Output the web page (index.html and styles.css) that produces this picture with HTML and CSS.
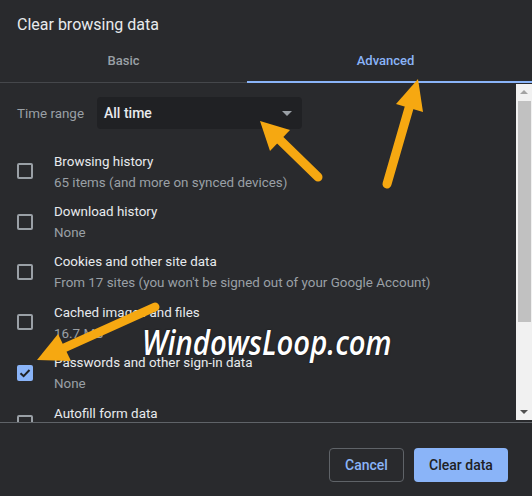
FILE: index.html
```html
<!DOCTYPE html>
<html lang="en">
<head>
  <meta charset="UTF-8">
  <title>Clear browsing data</title>
  <link rel="stylesheet" href="styles.css">
</head>
<body>

  <div class="dialog">
    <h1 class="title">Clear browsing data</h1>

    <div class="tabs">
      <div class="tab">Basic</div>
      <div class="tab active">Advanced</div>
    </div>

    <div class="body">
      <div class="list">
        <div class="range">
          <span class="range-label">Time range</span>
          <div class="select">
            <span>All time</span>
            <span class="caret"></span>
          </div>
        </div>

        <div class="row">
          <span class="box"></span>
          <div class="text">
            <div class="name">Browsing history</div>
            <div class="sub">65 items (and more on synced devices)</div>
          </div>
        </div>
        <div class="row">
          <span class="box"></span>
          <div class="text">
            <div class="name">Download history</div>
            <div class="sub">None</div>
          </div>
        </div>
        <div class="row">
          <span class="box"></span>
          <div class="text">
            <div class="name">Cookies and other site data</div>
            <div class="sub">From 17 sites (you won't be signed out of your Google Account)</div>
          </div>
        </div>
        <div class="row">
          <span class="box"></span>
          <div class="text">
            <div class="name">Cached images and files</div>
            <div class="sub">16.7 MB</div>
          </div>
        </div>
        <div class="row">
          <span class="box checked">
            <svg width="16" height="16" viewBox="0 0 16 16"><path d="M3.5 8.2 L6.6 11.2 L12.5 5" fill="none" stroke="#202124" stroke-width="2"/></svg>
          </span>
          <div class="text">
            <div class="name">Passwords and other sign-in data</div>
            <div class="sub">None</div>
          </div>
        </div>
        <div class="row">
          <span class="box"></span>
          <div class="text">
            <div class="name">Autofill form data</div>
            <div class="sub">None</div>
          </div>
        </div>
      </div>

      <div class="scrollbar">
        <div class="sb-up"></div>
        <div class="sb-thumb"></div>
        <div class="sb-down"></div>
      </div>
    </div>

    <div class="footer">
      <button class="btn cancel">Cancel</button>
      <button class="btn primary">Clear data</button>
    </div>
  </div>

  <!-- annotation overlay -->
  <svg class="marks" width="532" height="496" viewBox="0 0 532 496">
    <g stroke="#f6a811" stroke-width="9" stroke-linecap="round" fill="#f6a811">
      <line x1="318" y1="177" x2="280" y2="140"/>
      <line x1="387" y1="184" x2="409" y2="108"/>
      <line x1="155" y1="307" x2="64" y2="348"/>
    </g>
    <g fill="#f6a811">
      <polygon points="260,121 290,130 270,151"/>
      <polygon points="418,79 423,112 396,104"/>
      <polygon points="37,360 58,334 71,361"/>
    </g>
  </svg>
  <div class="watermark">WindowsLoop.com</div>

</body>
</html>
```

FILE: styles.css
```css
body {
  margin: 0;
  width: 532px;
  height: 496px;
  overflow: hidden;
  background: #292a2d;
  font-family: Roboto, "Liberation Sans", sans-serif;
  color: #e8eaed;
  position: relative;
}
.dialog {
  display: flex;
  flex-direction: column;
  height: 496px;
}
.title {
  margin: 0;
  height: 44px;
  box-sizing: border-box;
  padding: 15px 17px 0;
  font-size: 16px;
  line-height: 20px;
  font-weight: 400;
  color: #e8eaed;
}
.tabs {
  display: flex;
  height: 39px;
}
.tab {
  box-sizing: border-box;
  width: 247px;
  padding-top: 8px;
  line-height: 18px;
  font-size: 13px;
  font-weight: 500;
  text-align: center;
  color: #9aa0a6;
  border-bottom: 1px solid #45474b;
}
.tab.active {
  flex: 1;
  padding-right: 8px;
  color: #8ab4f8;
  border-bottom: 2px solid #8ab4f8;
}
.body {
  display: flex;
  height: 339px;
  overflow: hidden;
}
.list {
  flex: 1;
  padding-left: 17px;
}
.range {
  display: flex;
  align-items: center;
  margin-top: 14px;
  margin-bottom: 17px;
}
.range-label {
  width: 80px;
  font-size: 13.4px;
  color: #9aa0a6;
}
.select {
  display: flex;
  align-items: center;
  justify-content: space-between;
  width: 205px;
  height: 32px;
  box-sizing: border-box;
  padding: 0 8px 0 7px;
  background: #202124;
  border-radius: 4px;
  font-size: 14px;
  font-weight: 500;
  color: #e8eaed;
}
.caret {
  width: 0;
  height: 0;
  border-left: 5px solid transparent;
  border-right: 5px solid transparent;
  border-top: 5px solid #9aa0a6;
  margin-right: 2px;
}
.row {
  display: flex;
  align-items: center;
  height: 50.4px;
}
.box {
  box-sizing: border-box;
  width: 16px;
  height: 16px;
  border: 2px solid #9aa0a6;
  border-radius: 2px;
  margin-right: 21px;
  flex-shrink: 0;
}
.box.checked {
  border: none;
  background: #8ab4f8;
}
.box svg {
  display: block;
}
.text {
  padding-top: 1px;
}
.name {
  font-size: 13.4px;
  line-height: 21px;
  color: #e8eaed;
}
.sub {
  font-size: 13.4px;
  line-height: 21px;
  color: #9aa0a6;
}
.scrollbar {
  width: 16px;
  margin-top: 1px;
  height: 336px;
  background: #f1f1f1;
  display: flex;
  flex-direction: column;
  align-items: center;
}
.sb-up {
  margin-top: 6px;
  width: 0;
  height: 0;
  border-left: 4px solid transparent;
  border-right: 4px solid transparent;
  border-bottom: 4px solid #a3a3a3;
}
.sb-thumb {
  margin-top: 7px;
  width: 13px;
  height: 221px;
  background: #c1c1c1;
}
.sb-down {
  margin-top: auto;
  margin-bottom: 6px;
  width: 0;
  height: 0;
  border-left: 4px solid transparent;
  border-right: 4px solid transparent;
  border-top: 4px solid #505050;
}
.footer {
  flex: 1;
  border-top: 1px solid #5f6368;
  display: flex;
  justify-content: flex-end;
  align-items: flex-start;
  gap: 10px;
  padding: 25px 24px 0 0;
}
.btn {
  height: 34px;
  border-radius: 4px;
  font-family: Roboto, "Liberation Sans", sans-serif;
  font-size: 14px;
  font-weight: 500;
  padding: 0;
}
.cancel {
  width: 75px;
  background: transparent;
  border: 1px solid #5f6368;
  color: #8ab4f8;
}
.primary {
  width: 94px;
  background: #8ab4f8;
  border: none;
  color: #202124;
}
.marks {
  position: absolute;
  left: 0;
  top: 0;
  pointer-events: none;
}
.watermark {
  position: absolute;
  left: 142px;
  top: 320px;
  font-family: "Open Sans", sans-serif;
  font-style: italic;
  font-weight: 600;
  font-size: 34px;
  line-height: 44px;
  color: #ffffff;
  transform: scaleX(0.86);
  transform-origin: left center;
  text-shadow: 0 0 2px rgba(0,0,0,0.6);
  white-space: nowrap;
}
```
